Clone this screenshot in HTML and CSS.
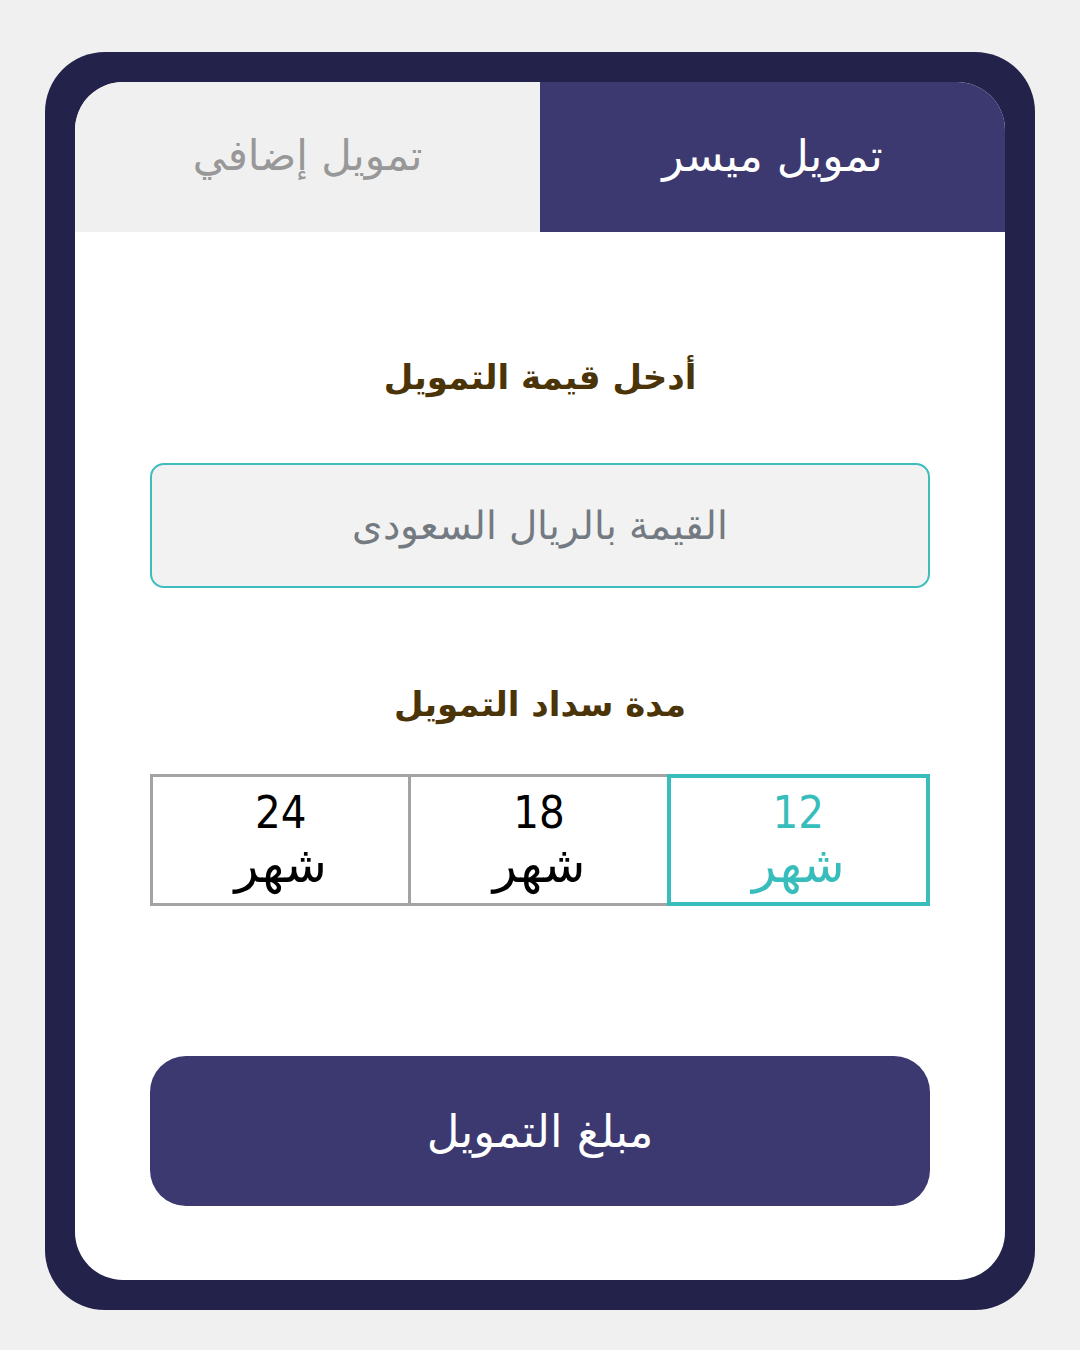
FILE: index.html
```html
<!DOCTYPE html>
<html lang="ar" dir="rtl">
<head>
<meta charset="utf-8">
<link rel="stylesheet" href="styles.css">
</head>
<body>
<div class="frame">
  <div class="card">
    <div class="tabs">
      <div class="tab active">تمويل ميسر</div>
      <div class="tab">تمويل إضافي</div>
    </div>
    <div class="body">
      <div class="label label-amount">أدخل قيمة التمويل</div>
      <div class="input"><span class="placeholder">القيمة بالريال السعودى</span></div>
      <div class="label label-period">مدة سداد التمويل</div>
      <div class="periods">
        <div class="period selected"><span class="num">12</span><span class="unit">شهر</span></div>
        <div class="period"><span class="num">18</span><span class="unit">شهر</span></div>
        <div class="period"><span class="num">24</span><span class="unit">شهر</span></div>
      </div>
      <div class="button">مبلغ التمويل</div>
    </div>
  </div>
</div>
</body>
</html>
```
FILE: styles.css
```css
html, body {
  margin: 0;
  padding: 0;
  background: #f0f0f0;
}
body {
  width: 1080px;
  height: 1350px;
  font-family: "DejaVu Sans", sans-serif;
}
.frame {
  margin: 52px 45px 0 45px;
  width: 990px;
  height: 1258px;
  box-sizing: border-box;
  background: #22224a;
  border-radius: 60px;
  padding: 30px;
}
.card {
  width: 930px;
  height: 1198px;
  background: #ffffff;
  border-radius: 48px;
  overflow: hidden;
  display: flex;
  flex-direction: column;
}
.tabs {
  display: flex;
  height: 150px;
}
.tab {
  flex: 1;
  display: flex;
  align-items: center;
  justify-content: center;
  background: #f0f0f0;
  color: #989898;
  font-size: 42px;
  padding-bottom: 4px;
  box-sizing: border-box;
}
.tab.active {
  background: #3c3870;
  color: #ffffff;
  font-size: 44px;
}
.body {
  padding: 0 75px;
  display: flex;
  flex-direction: column;
}
.label {
  text-align: center;
  color: #4a3408;
  font-weight: bold;
  font-size: 34px;
  line-height: 40px;
}
.label-amount {
  margin-top: 125px;
}
.input {
  margin-top: 66px;
  height: 125px;
  box-sizing: border-box;
  border: 2.5px solid #3dbdbd;
  border-radius: 14px;
  background: #f2f2f2;
  display: flex;
  align-items: center;
  justify-content: center;
}
.placeholder {
  color: #737a82;
  font-size: 38.5px;
  font-weight: 300;
}
.label-period {
  margin-top: 96px;
}
.periods {
  margin-top: 50px;
  display: flex;
  height: 132px;
}
.period {
  flex: 1;
  box-sizing: border-box;
  border: 3px solid #a3a3a3;
  display: flex;
  flex-direction: column;
  align-items: center;
  justify-content: center;
  color: #000000;
}
.period + .period {
  border-right: 0;
}
.period.selected {
  border: 4px solid #38bdbd;
  color: #38bdbd;
}
.num {
  font-family: "DejaVu Sans Condensed", "DejaVu Sans", sans-serif;
  font-size: 45px;
  line-height: 50px;
}
.unit {
  font-size: 50px;
  line-height: 54px;
}
.button {
  margin-top: 150px;
  height: 150px;
  border-radius: 36px;
  background: #3c3870;
  color: #ffffff;
  font-size: 45px;
  display: flex;
  align-items: center;
  justify-content: center;
}
```
